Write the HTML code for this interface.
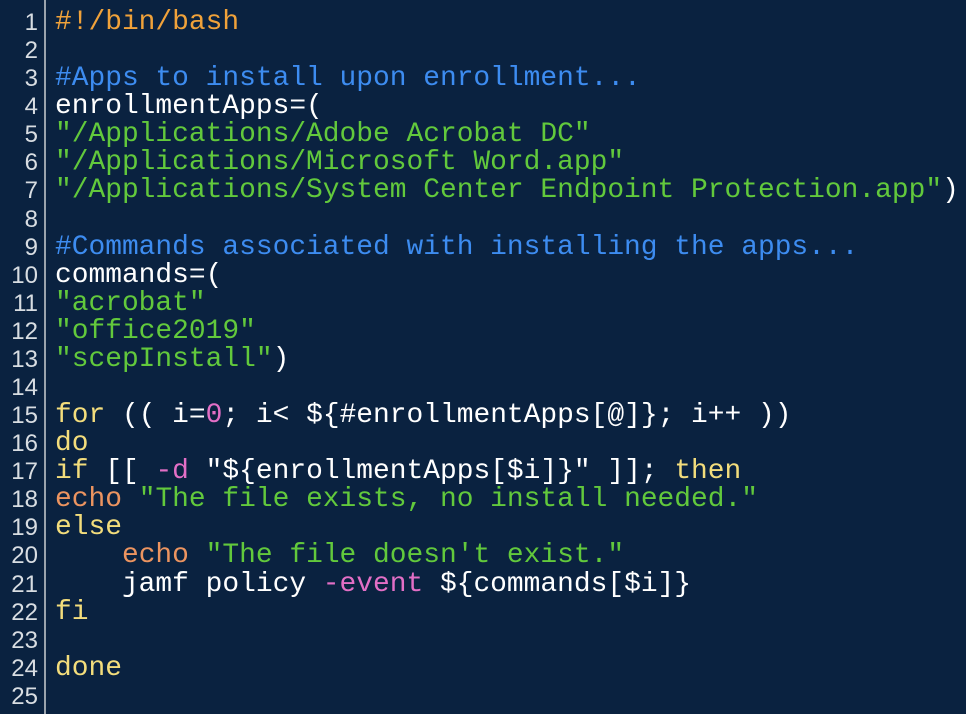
<!DOCTYPE html>
<html><head><meta charset="utf-8"><style>
html,body{margin:0;padding:0;background:#0a2240;width:966px;height:714px;overflow:hidden}
.g{position:absolute;left:44px;top:0;width:2px;height:714px;background:#9aa3ad}
.n{position:absolute;left:0;top:9px;width:38px;text-align:right;font:24px/28.08px "Liberation Sans",sans-serif;color:#d8dde2}
.c{position:absolute;left:55px;top:9px;font:27.9px/28.08px "Liberation Mono",monospace;color:#fff;white-space:pre}
.o{color:#f0a23a}.b{color:#3d8cf0}.s{color:#62c93c}.y{color:#f3dd7c}.p{color:#e36fc6}.e{color:#ec9460}
</style></head><body>
<div class="g"></div>
<div class="n">1<br>2<br>3<br>4<br>5<br>6<br>7<br>8<br>9<br>10<br>11<br>12<br>13<br>14<br>15<br>16<br>17<br>18<br>19<br>20<br>21<br>22<br>23<br>24<br>25</div>
<div class="c"><span class="o">#!/bin/bash</span>

<span class="b">#Apps to install upon enrollment...</span>
enrollmentApps=(
<span class="s">"/Applications/Adobe Acrobat DC"</span>
<span class="s">"/Applications/Microsoft Word.app"</span>
<span class="s">"/Applications/System Center Endpoint Protection.app"</span>)

<span class="b">#Commands associated with installing the apps...</span>
commands=(
<span class="s">"acrobat"</span>
<span class="s">"office2019"</span>
<span class="s">"scepInstall"</span>)

<span class="y">for</span> (( i=<span class="p">0</span>; i&lt; ${#enrollmentApps[@]}; i++ ))
<span class="y">do</span>
<span class="y">if</span> [[ <span class="p">-d</span> "${enrollmentApps[$i]}" ]]; <span class="y">then</span>
<span class="e">echo</span> <span class="s">"The file exists, no install needed."</span>
<span class="y">else</span>
    <span class="e">echo</span> <span class="s">"The file doesn't exist."</span>
    jamf policy <span class="p">-event</span> ${commands[$i]}
<span class="y">fi</span>

<span class="y">done</span>
</div>
</body></html>
